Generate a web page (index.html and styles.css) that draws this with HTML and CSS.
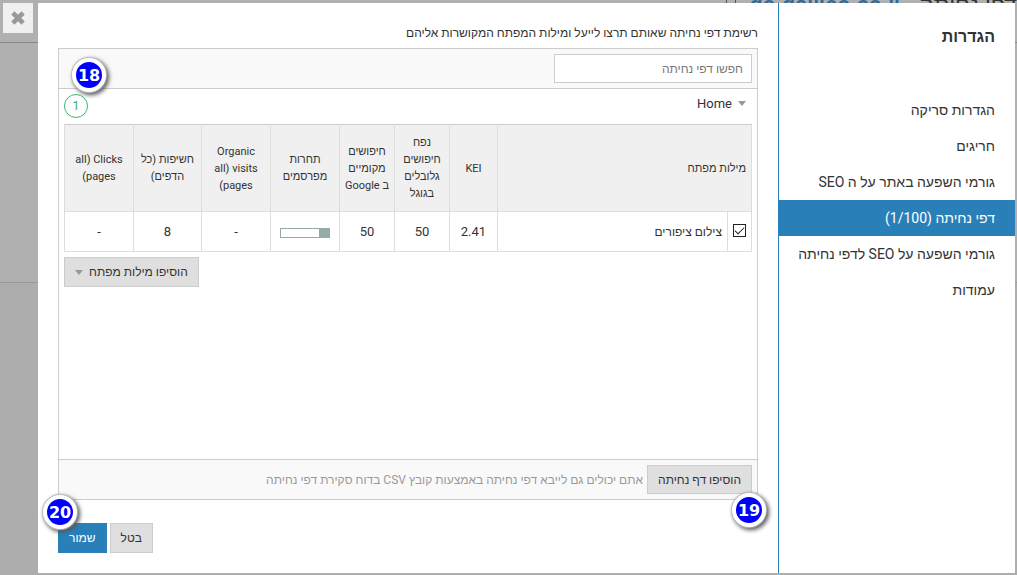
FILE: index.html
```html
<!DOCTYPE html>
<html lang="he" dir="rtl">
<head>
<meta charset="utf-8">
<meta name="viewport" content="width=device-width, initial-scale=1">
<title>הגדרות</title>
<link rel="stylesheet" href="styles.css">
</head>
<body>
<div class="backdrop" aria-hidden="true">
  <div class="backdrop-bar">
    <p class="backdrop-title">דפי נחיתה - <span class="backdrop-link">go.galileo.co.il</span> <span class="backdrop-icon"></span></p>
  </div>
  <div class="backdrop-block"></div>
  <div class="backdrop-rest"></div>
</div>
<div class="layer">
  <aside class="sidebar">
    <h1 class="sidebar-title">הגדרות</h1>
    <nav class="menu">
      <a class="menu-item" href="#scan">הגדרות סריקה</a>
      <a class="menu-item" href="#exceptions">חריגים</a>
      <a class="menu-item" href="#site-factors">גורמי השפעה באתר על ה SEO</a>
      <a class="menu-item menu-item-active" href="#landing" aria-current="page">דפי נחיתה (1/100)</a>
      <a class="menu-item" href="#page-factors">גורמי השפעה על SEO לדפי נחיתה</a>
      <a class="menu-item" href="#columns">עמודות</a>
    </nav>
  </aside>
  <main class="content">
    <label class="intro" for="search">רשימת דפי נחיתה שאותם תרצו לייעל ומילות המפתח המקושרות אליהם</label>
    <section class="panel">
      <div class="panel-bar">
        <input class="search" id="search" type="text" placeholder="חפשו דפי נחיתה">
        <span class="marker marker-search">18</span>
      </div>
      <div class="panel-body">
        <div class="page-row">
          <button class="page-toggle" type="button"><span class="caret"></span>Home</button>
          <span class="count">1</span>
        </div>
        <table class="keywords">
          <colgroup>
            <col class="col-check"><col class="col-word"><col class="col-kei"><col class="col-volume"><col class="col-volume"><col class="col-wide"><col class="col-wide"><col class="col-views"><col class="col-wide">
          </colgroup>
          <thead>
            <tr>
              <th class="cell-start" colspan="2" scope="col">מילות מפתח</th>
              <th scope="col">KEI</th>
              <th scope="col">נפח<br>חיפושים<br>גלובלים<br>בגוגל</th>
              <th scope="col">חיפושים<br>מקומיים<br>ב Google</th>
              <th scope="col">תחרות<br>מפרסמים</th>
              <th scope="col">Organic<br>visits &rlm;(all<br>pages)</th>
              <th scope="col">חשיפות (כל<br>הדפים)</th>
              <th scope="col">Clicks &rlm;(all<br>pages)</th>
            </tr>
          </thead>
          <tbody>
            <tr>
              <td class="cell-check"><input class="check" id="kw1" type="checkbox" checked></td>
              <td class="cell-start"><label class="word" for="kw1">צילום ציפורים</label></td>
              <td>2.41</td>
              <td>50</td>
              <td>50</td>
              <td><span class="meter"><span class="meter-fill"></span></span></td>
              <td>-</td>
              <td>8</td>
              <td>-</td>
            </tr>
          </tbody>
        </table>
        <div class="add-row">
          <button class="button button-menu" type="button">הוסיפו מילות מפתח<span class="caret"></span></button>
        </div>
      </div>
      <div class="panel-bar panel-footer">
        <button class="button button-add" type="button">הוסיפו דף נחיתה</button>
        <span class="hint">אתם יכולים גם לייבא דפי נחיתה באמצעות קובץ CSV בדוח סקירת דפי נחיתה</span>
        <span class="marker marker-add">19</span>
      </div>
    </section>
    <div class="actions">
      <button class="button" type="button">בטל</button>
      <button class="button button-primary" type="button">שמור</button>
      <span class="marker marker-save">20</span>
    </div>
  </main>
  <button class="close" type="button" aria-label="סגור">
    <svg class="close-icon" viewBox="0 0 14 14"><path d="M2.5 2.5 L11.500 11.500 M11.500 2.500 L2.500 11.500"/></svg>
  </button>
</div>
</body>
</html>
```

FILE: styles.css
```css
* { box-sizing: border-box; }

body {
  margin: 0;
  position: relative;
  min-height: 100vh;
  background: #b0b0b0;
  color: #333;
  font-family: Roboto, "Liberation Sans", sans-serif;
  font-size: 12px;
}

button, input { font: inherit; color: inherit; }

/* Page behind the dialog */
.backdrop {
  position: absolute;
  inset: 0;
  overflow: hidden;
  display: flex;
  flex-direction: column;
}
.backdrop-bar {
  height: 43px;
  border-bottom: 1px solid #888;
}
.backdrop-title {
  margin: -8px 0 0;
  font-size: 23px;
  line-height: 28px;
  color: #333;
  font-weight: 500;
  white-space: nowrap;
}
.backdrop-link { color: #2a6a9f; }
.backdrop-icon {
  display: inline-block;
  width: 10px;
  height: 14px;
  margin-right: 8px;
  border: 1px solid #555;
}
.backdrop-block {
  height: 240px;
  border-bottom: 1px solid #999;
}
.backdrop-rest { flex: 1; background: #adadad; }

/* Dialog */
.layer {
  position: relative;
  display: flex;
  min-height: 100vh;
  padding: 3px 2px 2px 3px;
}
.sidebar {
  flex: 0 0 237px;
  padding-top: 22px;
  background: #fff;
  border-left: 1px solid #2980b9;
}
.sidebar-title {
  margin: 0 0 43px;
  padding: 0 20px;
  font-size: 16px;
  line-height: 24px;
  font-weight: 700;
}
.menu { display: flex; flex-direction: column; }
.menu-item {
  padding: 0 20px 0 10px;
  font-size: 14px;
  line-height: 36px;
  color: #333;
  text-decoration: none;
  white-space: nowrap;
}
.menu-item-active { background: #2980b9; color: #fff; }

.content {
  flex: 1;
  min-width: 0;
  display: flex;
  flex-direction: column;
  padding: 20px;
  background: #fff;
}
.intro { line-height: 20px; margin-bottom: 5px; }

.panel {
  flex: 1;
  display: flex;
  flex-direction: column;
  border: 1px solid #ccc;
}
.panel-bar {
  position: relative;
  display: flex;
  align-items: center;
  height: 40px;
  padding: 0 5px;
  background: #f9f9f9;
  border-bottom: 1px solid #ccc;
}
.panel-footer { border-top: 1px solid #ccc; border-bottom: 0; gap: 4px; }
.search {
  width: 198px;
  height: 29px;
  padding: 0 8px;
  background: #fff;
  border: 1px solid #ccc;
}
.search::placeholder { color: #777; opacity: 1; }
.hint { color: #999; }

.panel-body { flex: 1; padding: 0 5px 5px; }
.page-row {
  display: flex;
  align-items: center;
  justify-content: space-between;
  height: 35px;
  padding-bottom: 2px;
  font-size: 13px;
}
.page-toggle {
  display: flex;
  align-items: center;
  gap: 6px;
  padding: 0 6px 4px;
  border: 0;
  background: none;
}
.caret {
  border: 4px solid transparent;
  border-top: 5px solid #999;
  border-bottom: 0;
}
.count {
  width: 24px;
  height: 24px;
  border: 1px solid #3cb371;
  border-radius: 50%;
  color: #3cb371;
  line-height: 22px;
  text-align: center;
}

/* Keyword table */
.keywords {
  width: 100%;
  table-layout: fixed;
  border-collapse: collapse;
  border: 1px solid #ccc;
}
.keywords th, .keywords td {
  padding: 0;
  border: 1px solid #ddd;
  border-top-color: #ccc;
  text-align: center;
}
.keywords th {
  height: 87px;
  background: #f0f0f0;
  font-size: 11px;
  line-height: 17px;
  font-weight: 400;
}
.keywords td { height: 40px; font-size: 13px; }
.keywords .cell-start { padding: 0 5px; text-align: right; }
.word { font-size: 12px; }
.col-check { width: 24px; }
.col-kei { width: 48px; }
.col-volume { width: 55px; }
.col-wide { width: 69px; }
.col-views { width: 68px; }
.check {
  appearance: none;
  display: block;
  width: 13px;
  height: 13px;
  margin: 0 auto 3px;
  border: 1px solid #222;
  background: #fff;
}
.check:checked::after {
  content: "";
  display: block;
  width: 8px;
  height: 4px;
  margin: 2px auto 0;
  border: solid #222;
  border-width: 0 0 1px 1px;
  transform: rotate(-45deg);
}
.meter {
  display: flex;
  width: 50px;
  height: 10px;
  margin: 3px auto 0;
  border: 1px solid #95aba7;
}
.meter-fill { width: 20%; background: #95aba7; }

/* Buttons */
.button {
  height: 30px;
  padding: 0 10px;
  border: 1px solid #ccc;
  background: #dfdfdf;
  line-height: 28px;
  white-space: nowrap;
}
.button-primary { background: #2980b9; border-color: #2980b9; color: #fff; }
.add-row { display: flex; justify-content: flex-end; padding-top: 5px; }
.button-menu { display: flex; align-items: center; gap: 6px; }
.button-add { height: 29px; }
.actions {
  position: relative;
  display: flex;
  justify-content: flex-end;
  gap: 3px;
  padding-top: 23px;
}

/* Numbered markers */
.marker {
  position: absolute;
  width: 34px;
  height: 34px;
  border: 4px solid #fff;
  border-radius: 50%;
  background: #00f;
  box-shadow: 0 0 1px 1px #bbb, 2px 2px 4px 1px #555;
  color: #fff;
  font: bold 16px/28px "DejaVu Sans", sans-serif;
  display: flex;
  justify-content: center;
}
.marker-search { left: 13px; top: 9px; }
.marker-add { right: -9px; top: 33px; }
.marker-save { left: -15px; top: -5px; }

.close {
  flex: 0 0 30px;
  height: 30px;
  margin-right: 5px;
  padding: 0;
  display: flex;
  align-items: center;
  justify-content: center;
  border: 0;
  background: #f0f0f0;
}
.close-icon {
  width: 16px;
  height: 16px;
  fill: none;
  stroke: #999;
  stroke-width: 4;
}
```
